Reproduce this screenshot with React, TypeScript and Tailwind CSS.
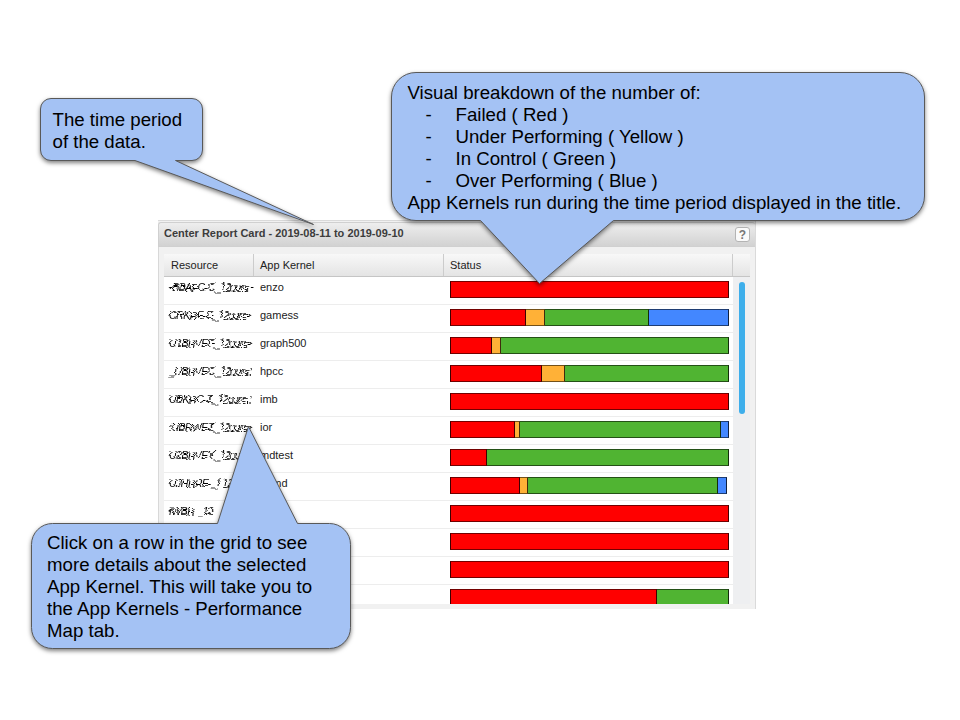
import type { ReactNode } from "react";

const RED = "#ff0000";
const YELLOW = "#ffb137";
const GREEN = "#50b432";
const BLUE = "#4387ff";

type Segment = [color: string, width: number];
type Row = { resource?: string; kernel?: string; status: Segment[] };

const FAILED: Segment[] = [[RED, 279]];

const rows: Row[] = [
  { resource: "•BBAFC-C_12core-", kernel: "enzo", status: FAILED },
  { resource: "CRKRE-E_12core•", kernel: "gamess", status: [[RED, 75.5], [YELLOW, 19.5], [GREEN, 103.5], [BLUE, 80.5]] },
  { resource: "U1BRVEF_12core•", kernel: "graph500", status: [[RED, 42], [YELLOW, 8.5], [GREEN, 228.5]] },
  { resource: "_UBRVEC_12core:", kernel: "hpcc", status: [[RED, 92], [YELLOW, 22.5], [GREEN, 164.5]] },
  { resource: "UBKRC-Z_12core::", kernel: "imb", status: FAILED },
  { resource: ":UBRWEZ_12core•", kernel: "ior", status: [[RED, 64.5], [YELLOW, 5.5], [GREEN, 201], [BLUE, 8]] },
  { resource: "U2BRVEY_12core", kernel: "mdtest", status: [[RED, 36.5], [GREEN, 242.5]] },
  { resource: "UJHRRE-_L12c", kernel: "namd", status: [[RED, 70], [YELLOW, 8], [GREEN, 190], [BLUE, 9]] },
  { resource: "fWBR-_12", status: FAILED },
  { status: FAILED },
  { status: FAILED },
  { status: [[RED, 207], [GREEN, 72]] },
];

function StatusBar({ segments }: { segments: Segment[] }) {
  return (
    <div className="flex h-[17px] w-[279px]">
      {segments.map(([color, width], i) => (
        <div
          key={i}
          className={
            "h-full shrink-0 border-y border-r border-x-black/75 border-y-black/55 " +
            (i === 0 ? "border-l" : "")
          }
          style={{ width, backgroundColor: color }}
        />
      ))}
    </div>
  );
}

function ReportCard() {
  return (
    <section className="flex h-[389px] w-[598px] flex-col border-r border-t border-[#dadada] bg-[#f1f1f1] text-[11px] text-[#222]">
      <header className="mt-px flex h-[25px] shrink-0 items-center justify-between rounded-t-[3px] border border-r-0 border-[#d0d0d0] bg-linear-to-b from-[#eeeeee] to-[#d2d2d2] pl-[5px] pr-[5px]">
        <h1 className="pb-[3px] font-bold leading-[14px] text-[#3c3c3c]">
          Center Report Card - 2019-08-11 to 2019-09-10
        </h1>
        <span className="flex h-[15px] w-[15px] items-center justify-center rounded-[3px] border border-[#b4b4b4] bg-[#fafafa] text-[12px] font-bold leading-none text-[#777]">
          ?
        </span>
      </header>
      <div className="flex flex-1 flex-col overflow-hidden border-l border-[#d8d8d8] pb-[4px] pl-[5px] pr-[5px] pt-[7px]">
        <div className="flex h-[23px] shrink-0 border-b border-[#c5c5c5] bg-linear-to-b from-[#f8f8f8] to-[#e4e4e4] leading-[22px]">
          <div className="w-[90px] border-r border-[#cccccc] pl-[7px]">Resource</div>
          <div className="w-[190px] border-r border-[#cccccc] pl-[6px]">App Kernel</div>
          <div className="w-[289px] border-r border-[#cccccc] pl-[6px]">Status</div>
        </div>
        <div className="flex h-[327px] shrink-0 overflow-hidden">
          <div className="w-[569px] bg-white">
            {rows.map((row, i) => (
              <div key={i} className="flex h-[28px] border-b border-[#ededed] leading-[21px]">
                <div className="w-[90px] whitespace-nowrap pl-[5px] text-[10.5px] italic tracking-[-0.5px] text-black [filter:url(#scramble)]">
                  {row.resource}
                </div>
                <div className="w-[190px] pl-[6px]">{row.kernel}</div>
                <div className="pl-[6px] pt-[4px]">
                  <StatusBar segments={row.status} />
                </div>
              </div>
            ))}
          </div>
          <div className="flex-1 bg-[#eeeff1] pl-[6px] pt-[5px]">
            <div className="h-[132px] w-[6px] rounded-full bg-[#3daeeb]" />
          </div>
        </div>
      </div>
    </section>
  );
}

function Callout({ className, children }: { className: string; children: ReactNode }) {
  return (
    <div className={"absolute whitespace-nowrap text-[18.67px] leading-[22px] text-black " + className}>
      {children}
    </div>
  );
}

function CalloutShapes() {
  return (
    <svg
      className="absolute left-0 top-0 [filter:drop-shadow(0_2px_2px_rgba(0,0,0,0.5))]"
      width="960"
      height="720"
      fill="#a4c2f4"
      stroke="#595959"
      strokeLinejoin="round"
    >
      <path d="M51 98.5H192a10.5 10.5 0 0 1 10.5 10.5V150a10.5 10.5 0 0 1-10.5 10.5H175.5L313.5 224.5 135 160.5H51A10.5 10.5 0 0 1 40.5 150V109A10.5 10.5 0 0 1 51 98.5Z" />
      <path d="M416 72.5H900a24.5 24.5 0 0 1 24.5 24.5V196a24.5 24.5 0 0 1-24.5 24.5H613.5L539.5 283.5 480.5 220.5H416A24.5 24.5 0 0 1 391.5 196V97A24.5 24.5 0 0 1 416 72.5Z" />
      <path d="M52.5 523.5H217.5L248.5 426.5 297.5 523.5H329.5a21 21 0 0 1 21 21V627.5a21 21 0 0 1-21 21H52.5a21 21 0 0 1-21-21V544.5a21 21 0 0 1 21-21Z" />
    </svg>
  );
}

const breakdown = [
  "Failed ( Red )",
  "Under Performing ( Yellow )",
  "In Control ( Green )",
  "Over Performing ( Blue )",
];

export default function App() {
  return (
    <main className="relative h-[720px] w-[960px] overflow-hidden bg-white pl-[158px] pt-[220px] font-['Liberation_Sans',Arial,sans-serif]">
      <svg className="absolute" width="0" height="0">
        <filter id="scramble" x="0" y="0" width="100%" height="100%" colorInterpolationFilters="sRGB">
          <feTurbulence type="fractalNoise" baseFrequency="0.08 0.7" numOctaves="1" seed="7" />
          <feDisplacementMap in="SourceGraphic" scale="5" xChannelSelector="R" yChannelSelector="A" />
        </filter>
      </svg>
      <ReportCard />
      <CalloutShapes />
      <Callout className="left-[52.5px] top-[109px]">
        <p>The time period</p>
        <p>of the data.</p>
      </Callout>
      <Callout className="left-[407.5px] top-[82px]">
        <p>Visual breakdown of the number of:</p>
        <ul>
          {breakdown.map((item) => (
            <li key={item} className="flex pl-[18px]">
              <span className="w-[30px]">-</span>
              <span>{item}</span>
            </li>
          ))}
        </ul>
        <p>App Kernels run during the time period displayed in the title.</p>
      </Callout>
      <Callout className="left-[47px] top-[532px]">
        <p>Click on a row in the grid to see</p>
        <p>more details about the selected</p>
        <p>App Kernel. This will take you to</p>
        <p>the App Kernels - Performance</p>
        <p>Map tab.</p>
      </Callout>
    </main>
  );
}
